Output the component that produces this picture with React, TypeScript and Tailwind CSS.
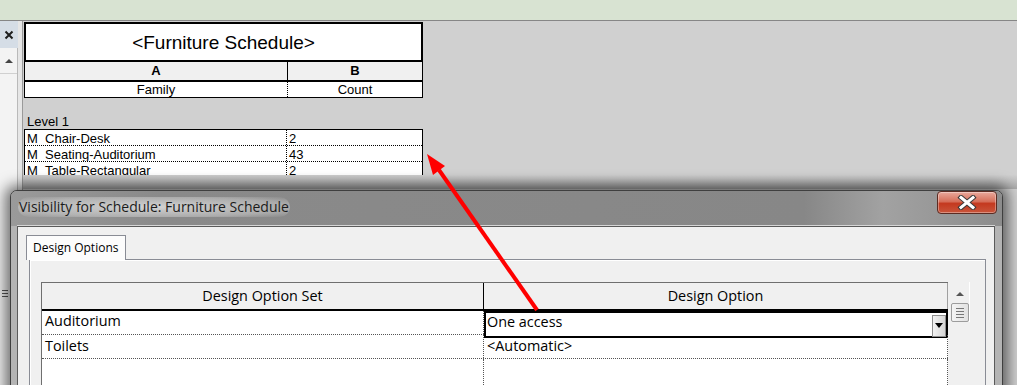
import { useState } from 'react'

const scheduleRows = [
    { family: 'M_Chair-Desk', count: '2' },
    { family: 'M_Seating-Auditorium', count: '43' },
    { family: 'M_Table-Rectangular', count: '2' },
]

function LeftPanel() {
    return (
        <div className="flex h-full w-[23px] shrink-0">
            <div className="flex w-[18px] flex-col">
                <div className="flex h-[27px] items-center justify-center bg-[#d5dde6]">
                    <svg width="10" height="10" viewBox="0 0 10 10">
                        <path d="M1.5 1.5 L8.5 8.5 M8.5 1.5 L1.5 8.5" stroke="#1e1e1e" strokeWidth="2" />
                    </svg>
                </div>
                <div className="flex flex-1 flex-col border-r border-[#b9b9b9] bg-[#f3f3f3]">
                    <div className="flex h-[26px] items-center justify-center border-b border-[#d0d0d0]">
                        <div className="h-0 w-0 border-x-[4px] border-b-[4px] border-x-transparent border-b-[#444]" />
                    </div>
                    <div className="mt-[216px] flex flex-col gap-[2px] pl-[2px]">
                        <div className="h-px w-[6px] bg-[#555]" />
                        <div className="h-px w-[6px] bg-[#555]" />
                        <div className="h-px w-[6px] bg-[#555]" />
                    </div>
                </div>
            </div>
            <div className="w-[5px] border-r border-[#9a9a9a] bg-[#e6e6e6]" />
        </div>
    )
}

function Schedule() {
    return (
        <div className="ml-px mt-px w-[399px] font-['Liberation_Sans',Arial,sans-serif] text-[13px] text-black">
            <div className="flex h-[40px] items-center justify-center border-2 border-black bg-white pt-[2px] text-[19px]">
                &lt;Furniture Schedule&gt;
            </div>
            <div className="flex h-[20px] border-x border-b-2 border-black bg-[#f0f0f0] font-bold">
                <div className="flex w-[263px] items-center justify-center border-r border-black">A</div>
                <div className="flex flex-1 items-center justify-center">B</div>
            </div>
            <div className="flex h-[16px] border-x border-b border-black bg-white leading-[16px]">
                <div className="w-[263px] border-r border-dotted border-black text-center">Family</div>
                <div className="flex-1 text-center">Count</div>
            </div>
            <div className="flex h-[31px] items-end pl-[3px] leading-[14px]">Level 1</div>
            <div className="border-x border-t border-black bg-white">
                {scheduleRows.map((row) => (
                    <div key={row.family} className="flex h-[16px] overflow-hidden border-b border-dotted border-black leading-[17px]">
                        <div className="w-[262px] border-r border-dotted border-black pl-[2px]">{row.family}</div>
                        <div className="flex-1 pl-[2px]">{row.count}</div>
                    </div>
                ))}
            </div>
        </div>
    )
}

function CloseButton() {
    return (
        <div className="flex h-[23px] w-[60px] items-center justify-center rounded-[4px] border border-[#5b2b22] bg-[linear-gradient(#e9a99c,#d66f5a_45%,#c4391f_55%,#c9553b)] shadow-[inset_0_0_0_1px_rgba(255,255,255,0.35)]">
            <svg width="20" height="15" viewBox="0 0 20 15">
                <path d="M4 2.5 L16 12.5 M16 2.5 L4 12.5" stroke="#3a3a3a" strokeWidth="5" strokeLinecap="square" />
                <path d="M4 2.5 L16 12.5 M16 2.5 L4 12.5" stroke="#ffffff" strokeWidth="3" strokeLinecap="square" />
            </svg>
        </div>
    )
}

function Scrollbar() {
    return (
        <div className="flex w-[20px] flex-col items-center border-r border-white">
            <div className="mt-[10px] h-0 w-0 border-x-[4px] border-b-[4px] border-x-transparent border-b-[#555]" />
            <div className="mt-[7px] flex h-[19px] w-[18px] flex-col items-center justify-center gap-[2px] rounded-[2px] border border-[#9c9c9c] bg-[linear-gradient(90deg,#f4f4f4,#e2e2e2)]">
                <div className="h-px w-[8px] bg-[#777]" />
                <div className="h-px w-[8px] bg-[#777]" />
                <div className="h-px w-[8px] bg-[#777]" />
                <div className="h-px w-[8px] bg-[#777]" />
            </div>
        </div>
    )
}

function OptionsGrid() {
    const [value] = useState('One access')
    return (
        <div className="ml-[11px] mt-[22px] flex">
            <div className="w-[907px] border-l border-t border-[#6f6f6f] bg-white text-[14.4px] text-black">
                <div className="flex h-[28px] border-b-2 border-black bg-[#f0f0f0]">
                    <div className="flex w-[442px] items-center justify-center border-r border-black">Design Option Set</div>
                    <div className="flex flex-1 items-center justify-center border-r border-[#a0a0a0]">Design Option</div>
                </div>
                <div className="flex h-[24px] border-b border-dotted border-[#555]">
                    <div className="flex w-[442px] items-center border-r border-dotted border-[#555] pb-[3px] pl-[3px]">Auditorium</div>
                    <div className="-mb-[4px] flex h-[27px] flex-1 items-center border-2 border-black bg-white pl-px">
                        <span className="mb-[5px] flex-1">{value}</span>
                        <div className="mt-[2px] flex h-[22px] w-[14px] items-center justify-center border border-[#8f8f8f] bg-[linear-gradient(90deg,#f2f2f2,#d4d4d4)]">
                            <div className="h-0 w-0 border-x-[4px] border-t-[5px] border-x-transparent border-t-black" />
                        </div>
                    </div>
                </div>
                <div className="flex h-[24px] border-b border-dotted border-[#555]">
                    <div className="flex w-[442px] items-center border-r border-dotted border-[#555] pb-[2px] pl-[3px]">Toilets</div>
                    <div className="flex flex-1 items-center border-r border-dotted border-[#555] pb-[2px] pl-[3px]">&lt;Automatic&gt;</div>
                </div>
                <div className="flex h-[40px]">
                    <div className="w-[442px] border-r border-dotted border-[#555]" />
                    <div className="flex-1 border-r border-dotted border-[#555]" />
                </div>
            </div>
            <div className="ml-[2px]">
                <Scrollbar />
            </div>
        </div>
    )
}

function VisibilityDialog() {
    return (
        <div className="absolute left-[10px] top-[190px] h-[220px] w-[993px] rounded-t-[7px] border border-[#3f3f3f] bg-[#b4b4b4] font-['Open_Sans','Noto_Sans',sans-serif] shadow-[0_0_14px_5px_rgba(0,0,0,0.55)]">
            <div className="flex h-[35px] items-start justify-between rounded-t-[6px] bg-[linear-gradient(90deg,#9a9a9a,#8a8a8a_15%,#878787_80%,#a2a2a2_88%,#8c8c8c)] pr-[5px]">
                <span className="ml-[7px] mt-[6px] rounded-[10px] bg-[radial-gradient(ellipse_at_center,rgba(235,235,235,0.75),rgba(235,235,235,0.35)_70%,transparent)] px-[1px] text-[14px] leading-[20px] text-[#1b1b1b]">
                    Visibility for Schedule: Furniture Schedule
                </span>
                <CloseButton />
            </div>
            <div className="ml-[6px] mr-[7px] h-[180px] border border-[#5a5a5a] bg-[#f0f0f0] shadow-[0_-1px_0_#d6d6d6]">
                <div className="ml-[8px] mt-[8px] flex">
                    <div className="relative z-10 -mb-px flex h-[25px] w-[100px] items-center border-x border-t border-[#898c95] bg-[#fcfcfc] pl-[6px] text-[12px] text-black">
                        Design Options
                    </div>
                </div>
                <div className="ml-[11px] mr-[8px] h-[140px] border border-[#898c95] bg-[#f0f0f0] shadow-[inset_1px_1px_0_#ffffff]">
                    <OptionsGrid />
                </div>
            </div>
        </div>
    )
}

function RedArrow() {
    return (
        <svg className="pointer-events-none absolute left-0 top-0" width="1017" height="385" viewBox="0 0 1017 385">
            <line x1="537" y1="310" x2="439" y2="170" stroke="#ff0000" strokeWidth="4" />
            <polygon points="427,154 445,166 433,175" fill="#ff0000" />
        </svg>
    )
}

export default function App() {
    return (
        <div className="relative h-[385px] w-[1017px] overflow-hidden bg-[#d0d0d0]">
            <div className="h-[20px] bg-[#d8e3d2]" />
            <div className="flex h-[365px] border-t border-[#868686]">
                <LeftPanel />
                <div className="flex flex-1 flex-col">
                    <div className="h-[154px] overflow-hidden">
                        <Schedule />
                    </div>
                    <div className="h-[14px] bg-[linear-gradient(#cfcfcf,#a8a8a8)]" />
                </div>
            </div>
            <VisibilityDialog />
            <RedArrow />
        </div>
    )
}
